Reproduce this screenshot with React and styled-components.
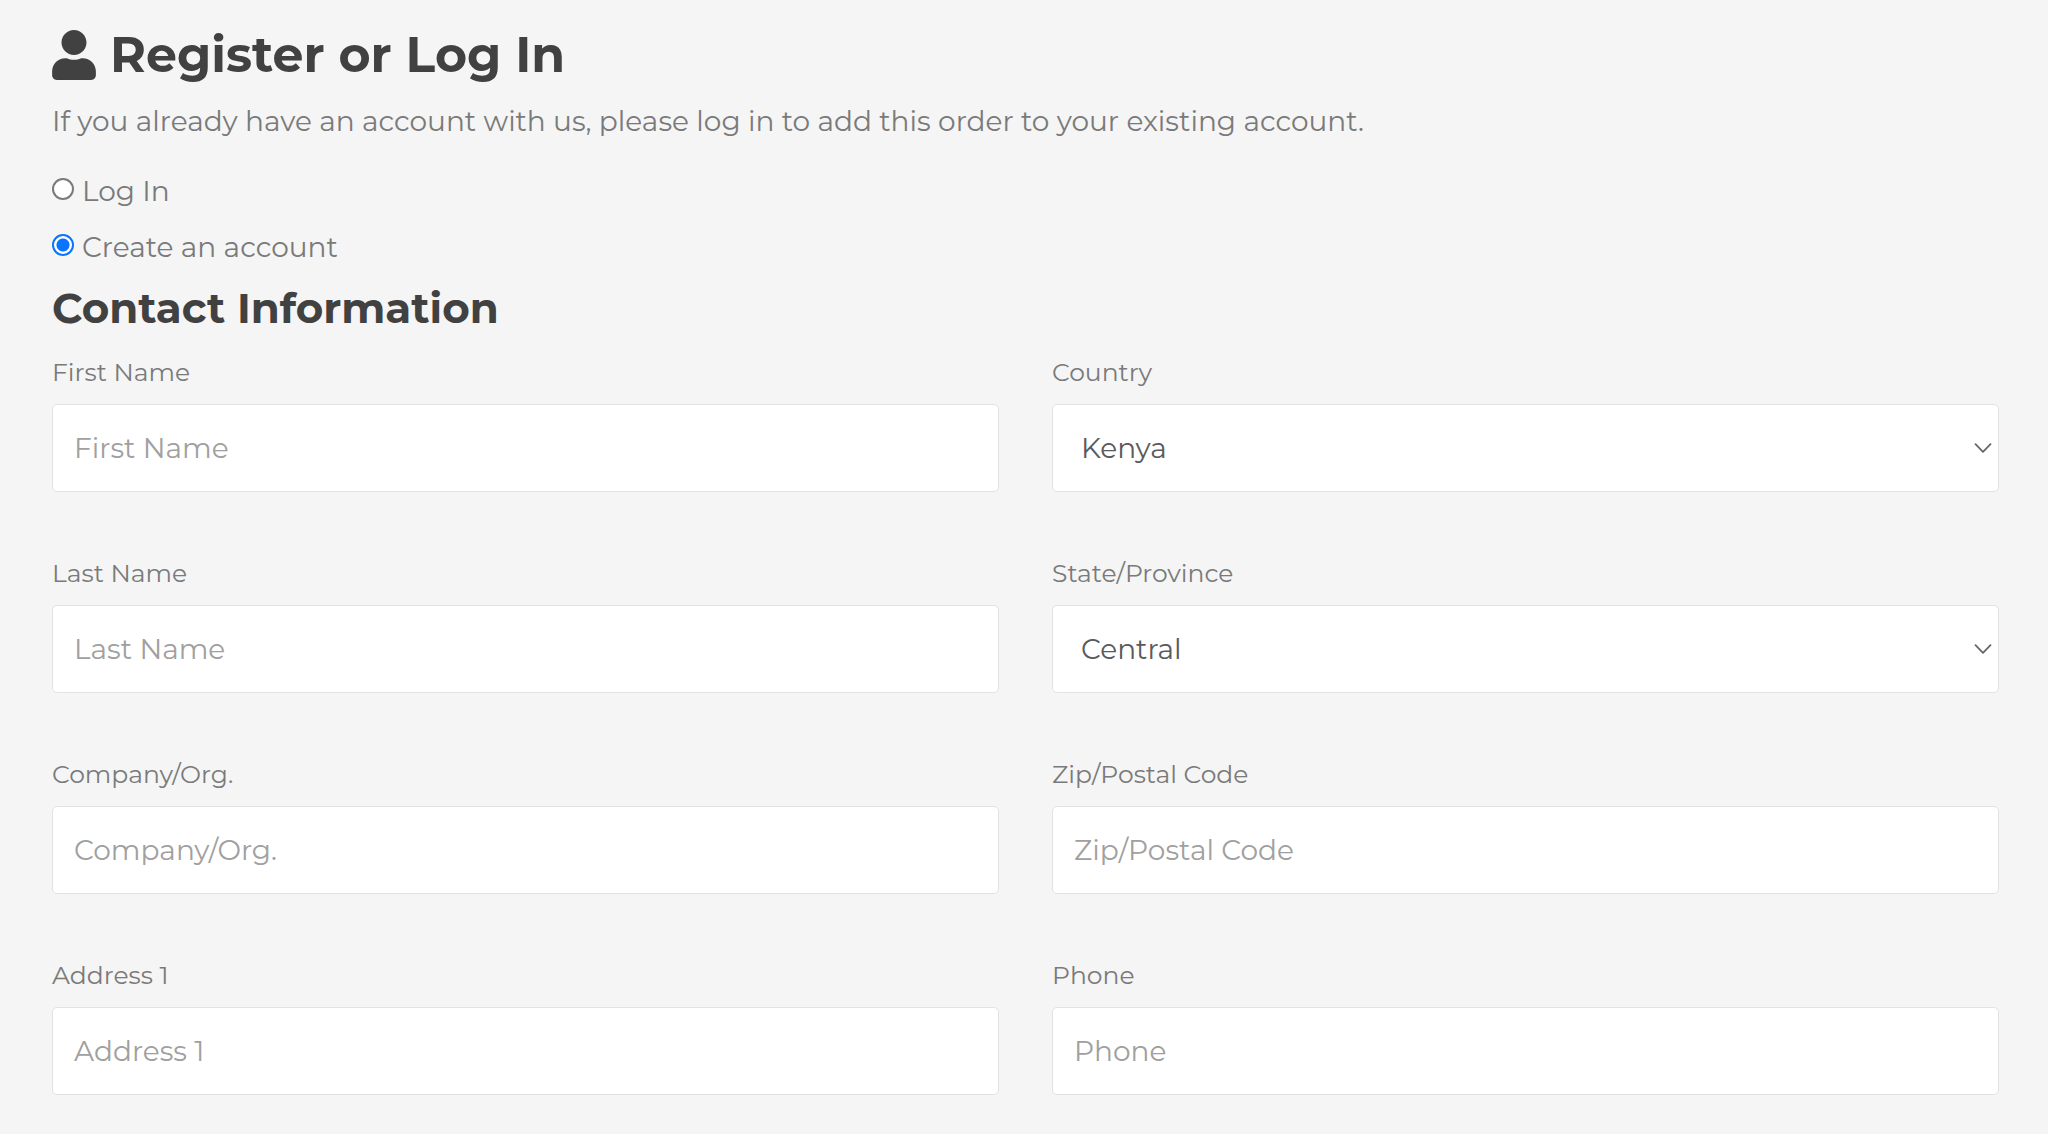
import React, { useState } from 'react'
import styled, { createGlobalStyle } from 'styled-components'

import { FaUser } from 'react-icons/fa'

const colors = {
  background: '#f5f5f5',
  heading: '#414141',
  text: '#7a7a7a',
  input: '#5a5a5a',
  placeholder: '#a0a0a0',
  border: '#e2e2e2',
  accent: '#0a74ff'
}

const GlobalStyle = createGlobalStyle`
  *, *::before, *::after {
    box-sizing: border-box;
  }

  body {
    margin: 0;
    background: ${colors.background};
    color: ${colors.text};
    font-family: Montserrat, Inter, sans-serif;
    font-size: 28px;
    line-height: 40px;
  }
`

const Page = styled.main`
  padding: 24px 49px 38px 52px;
`

const Title = styled.h1`
  display: flex;
  align-items: center;
  gap: 14px;
  margin: 0;
  color: ${colors.heading};
  font-size: 49px;
  font-weight: 700;
  line-height: 62px;
`

const UserIcon = styled(FaUser)`
  width: 44px;
  height: 50px;
`

const Intro = styled.p`
  margin: 15px 0 28px;
`

const Choices = styled.div`
  display: grid;
  gap: 12px;
  margin-bottom: 13px;
`

const Choice = styled.label`
  display: flex;
  align-items: center;
  gap: 8px;
  line-height: 44px;
`

const Radio = styled.input`
  appearance: none;
  width: 22px;
  height: 22px;
  margin: 0 0 4px;
  border: 2px solid ${colors.text};
  border-radius: 50%;
  background: #fff;

  &:checked {
    border-color: ${colors.accent};
    background: radial-gradient(circle, ${colors.accent} 6px, #fff 7px);
  }
`

const SectionTitle = styled.h2`
  margin: 0 0 18px;
  color: ${colors.heading};
  font-size: 42px;
  font-weight: 700;
  line-height: 52px;
`

const Fields = styled.div`
  display: grid;
  grid-template-columns: 1fr 1fr;
  column-gap: 53px;
`

const Column = styled.div`
  display: grid;
  gap: 61px;
`

const Field = styled.div`
  display: grid;
  gap: 12px;
`

const Label = styled.label`
  font-size: 25px;
  line-height: 40px;
`

const controlStyles = `
  width: 100%;
  height: 88px;
  border: 1px solid ${colors.border};
  border-radius: 5px;
  background-color: #fff;
  color: ${colors.input};
  font: inherit;
`

const Input = styled.input`
  ${controlStyles}
  padding: 0 21px;

  &::placeholder {
    color: ${colors.placeholder};
    opacity: 1;
  }
`

const SelectWrap = styled.div`
  display: grid;
  align-items: center;

  > * {
    grid-area: 1 / 1;
  }
`

const Select = styled.select`
  ${controlStyles}
  appearance: none;
  padding: 0 28px;
`

const Chevron = styled.svg`
  justify-self: end;
  width: 18px;
  height: 10px;
  margin-right: 7px;
  fill: none;
  stroke: #666;
  stroke-width: 1.8;
  stroke-linecap: round;
  stroke-linejoin: round;
  pointer-events: none;
`

const columns = [
  [
    { id: 'first-name', label: 'First Name' },
    { id: 'last-name', label: 'Last Name' },
    { id: 'company', label: 'Company/Org.' },
    { id: 'address-1', label: 'Address 1' }
  ],
  [
    { id: 'country', label: 'Country', options: ['Kenya'] },
    { id: 'state', label: 'State/Province', options: ['Central'] },
    { id: 'zip', label: 'Zip/Postal Code' },
    { id: 'phone', label: 'Phone', type: 'tel' }
  ]
]

const FormField = ({ id, label, options, type = 'text' }) => (
  <Field>
    <Label htmlFor={id}>{label}</Label>
    {options ? (
      <SelectWrap>
        <Select id={id} name={id}>
          {options.map(option => <option key={option}>{option}</option>)}
        </Select>
        <Chevron viewBox='0 0 18 10' aria-hidden='true'>
          <path d='M1.500 1.200 9 8.800l7.500-7.600' />
        </Chevron>
      </SelectWrap>
    ) : (
      <Input id={id} name={id} type={type} placeholder={label} />
    )}
  </Field>
)

const App = () => {
  const [mode, setMode] = useState('create')

  return (
    <Page>
      <GlobalStyle />
      <Title>
        <UserIcon aria-hidden='true' />
        Register or Log In
      </Title>
      <Intro>If you already have an account with us, please log in to add this order to your existing account.</Intro>

      <Choices role='radiogroup' aria-label='Account'>
        <Choice>
          <Radio type='radio' name='mode' checked={mode === 'login'} onChange={() => setMode('login')} />
          Log In
        </Choice>
        <Choice>
          <Radio type='radio' name='mode' checked={mode === 'create'} onChange={() => setMode('create')} />
          Create an account
        </Choice>
      </Choices>

      <SectionTitle>Contact Information</SectionTitle>
      <Fields>
        {columns.map((fields, i) =>
          <Column key={i}>
            {fields.map(field => <FormField key={field.id} {...field} />)}
          </Column>
        )}
      </Fields>
    </Page>
  )
}

export default App
